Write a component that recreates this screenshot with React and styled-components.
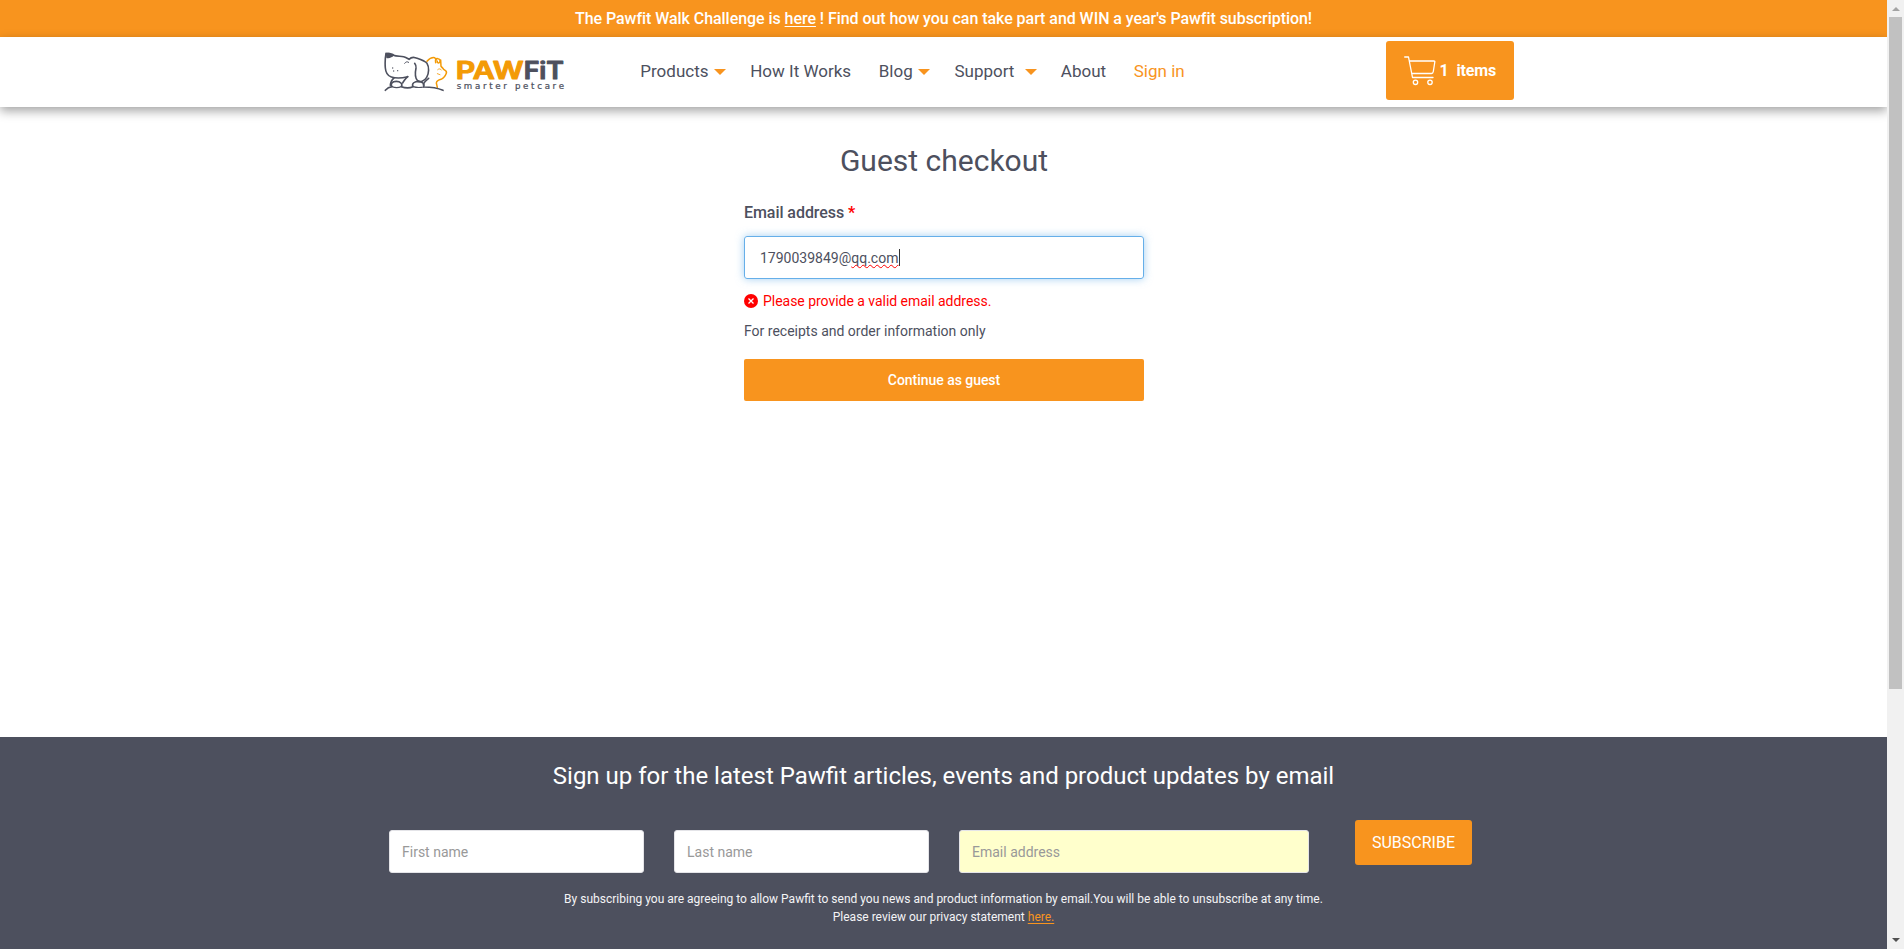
import React from "react";
import styled, { createGlobalStyle, css } from "styled-components";

const orange = "#f8941e";
const slate = "#4d505e";

const GlobalStyle = createGlobalStyle`
  *, *::before, *::after { box-sizing: border-box; }
  body { margin: 0; background: #fff; color: ${slate}; font-family: Roboto, "Liberation Sans", sans-serif; overflow: hidden; }
  h1, h2, p { margin: 0; font-weight: 400; }
`;
const Frame = styled.div`display: flex; height: 949px;`;
const Page = styled.div`display: flex; flex-direction: column; width: 1887px; flex: none; overflow: hidden;`;
const Banner = styled.div`
  height: 37px; flex: none; background: ${orange}; color: #fff; text-align: center;
  font-size: 16px; line-height: 37px; font-weight: 500; letter-spacing: -0.055px;
  a { color: inherit; text-underline-offset: 2px; }
`;
const Header = styled.header`
  display: flex; align-items: flex-start; height: 70px; flex: none; padding-left: 384px;
  background: #fff; box-shadow: 0 4px 10px rgba(0, 0, 0, 0.36);
`;
const LogoSvg = styled.svg`display: block; margin-top: 13px; flex: none;`;
const Nav = styled.nav`
  display: flex; align-items: center; gap: 27.7px; width: 745.7px; height: 68px; margin-left: 74.3px;
`;
const NavItem = styled.a`
  display: flex; align-items: center; font-size: 17px; line-height: 20px; white-space: nowrap;
  color: ${(p) => (p.$accent ? orange : slate)};
`;
const Caret = styled.i`
  border: 6px solid transparent; border-top-color: ${orange}; border-bottom: 0;
  margin: 2px -3.5px 0 ${(p) => p.$gap}px;
`;
const CartButton = styled.button`
  display: flex; align-items: center; width: 128px; height: 59px; margin-top: 4px; padding: 0 0 0 18px;
  border: 0; border-radius: 3px; background: ${orange}; color: #fff; font: 700 16px/20px Roboto, sans-serif;
  letter-spacing: -0.15px;
  svg { flex: none; }
`;
const Count = styled.span`margin-left: 3.5px; width: 17px; text-align: left;`;
const Main = styled.main`display: flex; flex-direction: column; height: 630px; flex: none; width: 400px; margin-left: 744px;`;
const Title = styled.h1`margin-top: 36px; font-size: 30px; line-height: 36px; text-align: center;`;
const Label = styled.label`
  margin-top: 23px; font-size: 16px; line-height: 22px; font-weight: 500; letter-spacing: -0.06px;
  em { color: #f00; font-style: normal; font-weight: 700; }
`;
const EmailField = styled.div`
  display: flex; align-items: center; height: 43px; margin-top: 12px; padding-left: 15px;
  border: 1px solid #66afe9; border-radius: 3px; box-shadow: 0 0 8px rgba(102, 175, 233, 0.6);
  font-size: 14px; line-height: 18px;
`;
const Misspelt = styled.span`
  text-decoration: underline wavy #f00 1px; text-underline-offset: 1px; text-decoration-skip-ink: none;
`;
const Cursor = styled.i`width: 1px; height: 17px; margin-left: 1px; background: #333;`;
const ErrorText = styled.p`
  display: flex; align-items: center; gap: 5px; margin-top: 13px; color: #f00;
  font-size: 14px; line-height: 18px; letter-spacing: -0.03px;
`;
const Hint = styled.p`margin-top: 12px; font-size: 14px; line-height: 18px;`;
const Continue = styled.button`
  height: 42px; margin-top: 19px; border: 0; border-radius: 2px; background: ${orange}; color: #fff;
  font: 500 14px/18px Roboto, sans-serif; letter-spacing: -0.04px;
`;
const Footer = styled.footer`height: 212px; flex: none; background: ${slate}; color: #fff; text-align: center;`;
const FooterTitle = styled.h2`padding-top: 24px; font-size: 24px; line-height: 30px;`;
const Signup = styled.form`display: flex; align-items: flex-start; gap: 30px; margin: 29px 0 0 389px;`;
const Field = styled.input`
  width: ${(p) => p.$w}px; height: 43px; margin-top: 10px; padding: 0 12px; border: 1px solid #e4e4e8; border-radius: 3px;
  background: ${(p) => (p.$filled ? "#ffffcc" : "#fff")}; font: 400 14px/18px Roboto, sans-serif; outline: 0;
  &::placeholder { color: #999; opacity: 1; }
`;
const Subscribe = styled.button`
  width: 117px; height: 45px; margin-left: 16px; padding: 0; border: 0; border-radius: 3px;
  background: ${orange}; color: #fff; font: 400 16px/20px Roboto, sans-serif;
`;
const Terms = styled.p`
  margin-top: 17px; font-size: 12px; line-height: 18px; color: #f4f4f6;
  a { color: ${orange}; text-decoration: underline; text-underline-offset: 2px; }
`;
const Scrollbar = styled.aside`
  display: flex; flex-direction: column; align-items: center; width: 17px; height: 949px; background: #f1f1f1;
`;
const Arrow = styled.i`
  border: 4px solid transparent;
  ${(p) => p.$up
    ? css`border-top: 0; border-bottom-color: #a3a3a3; margin: 7px 0 6px;`
    : css`border-bottom: 0; border-top-color: #505050; margin: auto 0 7px;`}
`;
const Thumb = styled.div`width: 13px; height: 672px; background: #c1c1c1;`;

const Logo = () => (
  <LogoSvg width="182" height="43" viewBox="42 42 546 129" fill="none" strokeLinecap="round" strokeLinejoin="round">
    <g stroke="#f39a06" strokeWidth="4.5">
      <path d="M171 76C178 68 187 64 194 65L199 72M197 80C195 70 198 66 204 68C211 69 212 76 208 80C204 82 201 79 202 76M212 72L213 91C218 95 219 98 222 101C228 104 231 107 229 112C226 120 221 127 213 130C205 132 200 135 199 141L202 154" />
      <path d="M203 101C207 97 212 98 214 102M202 113L210 116" strokeWidth="2.5" />
    </g>
    <g stroke={slate} strokeWidth="4.8">
      <path d="M48 52C45 68 45 84 46 96C47 110 52 119 64 123C80 128 98 126 113 122" />
      <path d="M70 58C80 62 90 60 101 62C108 64 112 67 117 70C122 65 129 63 136 65C151 70 163 73 171 82C178 93 177 112 170 124C163 136 150 141 142 133C133 123 136 106 138 96C139 90 137 86 134 82" />
      <path d="M104 82C107 77 112 76 116 79" strokeWidth="3" />
      <path d="M72 126C65 131 62 139 61 148M113 122C106 129 101 134 98 141M176 127C168 133 161 139 160 147" />
      <path d="M46 163C52 156 58 153 66 152C60 143 67 136 79 136C91 136 99 144 94 152C105 156 118 157 129 152C124 142 134 136 146 136C158 137 165 145 161 153C179 153 203 156 219 163" />
      <path d="M66 152C74 155 86 155 94 152M129 152C139 155 151 155 161 153" strokeWidth="3.5" />
    </g>
    <path d="M47 51C53 47 68 51 73 56C67 64 57 69 49 66Z" fill={slate} />
    <g fill={slate}><circle cx="68" cy="96" r="2" /><circle cx="71" cy="105" r="2" /><circle cx="83" cy="104" r="2" /></g>
    <g fontFamily="Inter, sans-serif" fontSize="72" fontWeight="600" strokeWidth="3">
      <text x="257" y="130" fill="#f39a06" stroke="#f39a06" textLength="204" lengthAdjust="spacingAndGlyphs">PAW</text>
      <text x="461" y="130" fill={slate} stroke={slate} textLength="121" lengthAdjust="spacingAndGlyphs">FiT</text>
    </g>
    <text x="260" y="158" fill={slate} stroke={slate} strokeWidth="0.7" fontFamily="'DejaVu Sans', sans-serif" fontSize="26" textLength="322">smarter petcare</text>
  </LogoSvg>
);

const CartIcon = () => (
  <svg width="32" height="30" viewBox="0 0 32 30" fill="none" stroke="#fff" strokeWidth="1.3" strokeLinecap="round" strokeLinejoin="round">
    <path d="M0.700 1H4.500L8.500 21.500H29M5.500 5H30Q31 5 30.800 6L29.300 15.500Q29 17.500 27.500 17.500H8" />
    <circle cx="11.500" cy="26.300" r="2.200" /><circle cx="26" cy="26.300" r="2.200" />
  </svg>
);

const ErrorIcon = () => (
  <svg width="14" height="14" viewBox="0 0 14 14">
    <circle cx="7" cy="7" r="7" fill="#f00" />
    <path d="M4.500 4.500L9.500 9.500M9.500 4.500L4.500 9.500" stroke="#fff" strokeWidth="1.300" />
  </svg>
);

const links = [
  { text: "Products", gap: 5.5 }, { text: "How It Works" }, { text: "Blog", gap: 5.5 },
  { text: "Support", gap: 10.2 }, { text: "About" }, { text: "Sign in", accent: true },
];

export default function App() {
  return (
    <Frame>
      <GlobalStyle />
      <Page>
        <Banner>The Pawfit Walk Challenge is <a href="#here">here</a> ! Find out how you can take part and WIN a year's Pawfit subscription!</Banner>
        <Header>
          <Logo />
          <Nav>
            {links.map((l) => (
              <NavItem key={l.text} $accent={l.accent}>{l.text}{l.gap && <Caret $gap={l.gap} />}</NavItem>
            ))}
          </Nav>
          <CartButton><CartIcon /><Count>1</Count>items</CartButton>
        </Header>
        <Main>
          <Title>Guest checkout</Title>
          <Label>Email address <em>*</em></Label>
          <EmailField>1790039849@<Misspelt>qq.com</Misspelt><Cursor /></EmailField>
          <ErrorText><ErrorIcon />Please provide a valid email address.</ErrorText>
          <Hint>For receipts and order information only</Hint>
          <Continue>Continue as guest</Continue>
        </Main>
        <Footer>
          <FooterTitle>Sign up for the latest Pawfit articles, events and product updates by email</FooterTitle>
          <Signup>
            <Field $w={255} placeholder="First name" />
            <Field $w={255} placeholder="Last name" />
            <Field $w={350} $filled placeholder="Email address" />
            <Subscribe type="button">SUBSCRIBE</Subscribe>
          </Signup>
          <Terms>
            By subscribing you are agreeing to allow Pawfit to send you news and product information by email.You will be able to unsubscribe at any time.<br />
            Please review our privacy statement <a href="#privacy">here.</a>
          </Terms>
        </Footer>
      </Page>
      <Scrollbar><Arrow $up /><Thumb /><Arrow /></Scrollbar>
    </Frame>
  );
}
